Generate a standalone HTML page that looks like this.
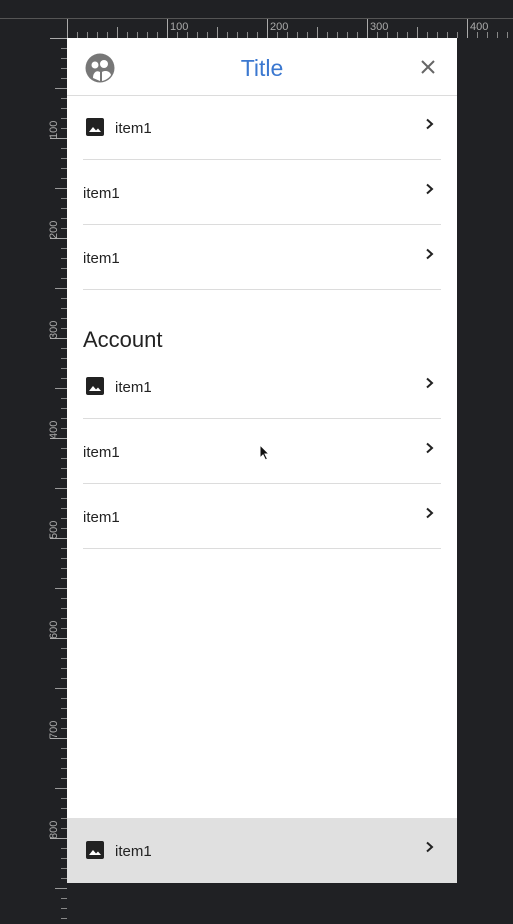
<!DOCTYPE html>
<html><head><meta charset="utf-8"><style>
*{margin:0;padding:0;box-sizing:border-box}
body{width:513px;height:924px;background:#202124;position:relative;overflow:hidden;font-family:"Liberation Sans",sans-serif}
.hr{position:absolute;left:0;top:18px;width:513px;height:1px;background:#555}
.rt{position:absolute;left:67px;top:19px;width:446px;height:19px;background:repeating-linear-gradient(90deg,#888 0 1px,transparent 1px 10px) 0 13px/100% 6px no-repeat}
.rt2{position:absolute;left:67px;top:19px;width:446px;height:19px;background:repeating-linear-gradient(90deg,#999 0 1px,transparent 1px 50px) 0 8px/100% 11px no-repeat}
.rt3{position:absolute;left:67px;top:19px;width:446px;height:19px;background:repeating-linear-gradient(90deg,#aaa 0 1px,transparent 1px 100px) 0 0/100% 19px no-repeat}
.rl{position:absolute;left:50px;top:38px;width:17px;height:886px;background:repeating-linear-gradient(180deg,#888 0 1px,transparent 1px 10px) 11px 0/6px 100% no-repeat}
.rl2{position:absolute;left:50px;top:38px;width:17px;height:886px;background:repeating-linear-gradient(180deg,#999 0 1px,transparent 1px 50px) 5px 0/12px 100% no-repeat}
.rl3{position:absolute;left:50px;top:38px;width:17px;height:886px;background:repeating-linear-gradient(180deg,#aaa 0 1px,transparent 1px 100px) 0 0/17px 100% no-repeat}
.tl{position:absolute;top:21px;font-size:11px;color:#aaa}
.vl{position:absolute;left:48px;font-size:11px;color:#aaa;transform:rotate(-90deg);transform-origin:left top}
.panel{position:absolute;left:67px;top:38px;width:390px;height:845px;background:#fff}
.title{position:absolute;left:0;width:390px;top:17px;text-align:center;font-size:23px;color:#3b78d0}
.div{position:absolute;height:1px;background:#dcdcdc}
.it{position:absolute;left:16px;font-size:15px;color:#222}
.chev{position:absolute;left:357px}
.img{position:absolute;left:19px;width:18px;height:18px}
</style></head><body>
<div class="hr"></div>
<div class="rt"></div><div class="rt2"></div><div class="rt3"></div>
<div class="tl" style="left:170px">100</div><div class="tl" style="left:270px">200</div><div class="tl" style="left:370px">300</div><div class="tl" style="left:470px">400</div>
<div class="rl"></div><div class="rl2"></div><div class="rl3"></div>
<div class="vl" style="top:139px">100</div><div class="vl" style="top:239px">200</div><div class="vl" style="top:339px">300</div><div class="vl" style="top:439px">400</div><div class="vl" style="top:539px">500</div><div class="vl" style="top:639px">600</div><div class="vl" style="top:739px">700</div><div class="vl" style="top:839px">800</div>
<div class="panel">
<svg style="position:absolute;left:18px;top:15px" width="30" height="30" viewBox="0 0 30 30"><circle cx="15" cy="15" r="14.5" fill="#777"/><circle cx="10" cy="12" r="3.5" fill="#fff"/><circle cx="19" cy="11" r="4" fill="#fff"/><path d="M8 25 C8 19 12 17 15 19 L15 28 Z" fill="#fff"/><path d="M17 28 L17 19 C20 17 25 18 26 22 C24 25 21 27 17 28Z" fill="#fff"/></svg>
<div class="title">Title</div>
<svg style="position:absolute;left:354px;top:22px" width="14" height="14" viewBox="0 0 14 14"><path d="M1 1L13 13M13 1L1 13" stroke="#666" stroke-width="2"/></svg>
<div class="div" style="left:0;width:390px;top:57px"></div>

<svg class="img" style="top:80px" viewBox="0 0 18 18"><rect width="18" height="18" rx="2" fill="#222"/><path d="M3 14L7 9L10 12.5L12 10.5L15 14Z" fill="#fff"/></svg>
<div class="it" style="left:48px;top:82px">item1</div>
<svg class="chev" style="top:80px" width="12" height="12" viewBox="0 0 12 12"><path d="M3 1.5L8 6L3 10.5" stroke="#222" stroke-width="2" fill="none"/></svg>
<div class="div" style="left:16px;width:358px;top:121px"></div>
<div class="it" style="top:147px">item1</div>
<svg class="chev" style="top:145px" width="12" height="12" viewBox="0 0 12 12"><path d="M3 1.5L8 6L3 10.5" stroke="#222" stroke-width="2" fill="none"/></svg>
<div class="div" style="left:16px;width:358px;top:186px"></div>
<div class="it" style="top:212px">item1</div>
<svg class="chev" style="top:210px" width="12" height="12" viewBox="0 0 12 12"><path d="M3 1.5L8 6L3 10.5" stroke="#222" stroke-width="2" fill="none"/></svg>
<div class="div" style="left:16px;width:358px;top:251px"></div>

<div class="it" style="top:289px;font-size:22px">Account</div>
<svg class="img" style="top:339px" viewBox="0 0 18 18"><rect width="18" height="18" rx="2" fill="#222"/><path d="M3 14L7 9L10 12.5L12 10.5L15 14Z" fill="#fff"/></svg>
<div class="it" style="left:48px;top:341px">item1</div>
<svg class="chev" style="top:339px" width="12" height="12" viewBox="0 0 12 12"><path d="M3 1.5L8 6L3 10.5" stroke="#222" stroke-width="2" fill="none"/></svg>
<div class="div" style="left:16px;width:358px;top:380px"></div>
<div class="it" style="top:406px">item1</div>
<svg class="chev" style="top:404px" width="12" height="12" viewBox="0 0 12 12"><path d="M3 1.5L8 6L3 10.5" stroke="#222" stroke-width="2" fill="none"/></svg>
<div class="div" style="left:16px;width:358px;top:445px"></div>
<div class="it" style="top:471px">item1</div>
<svg class="chev" style="top:469px" width="12" height="12" viewBox="0 0 12 12"><path d="M3 1.5L8 6L3 10.5" stroke="#222" stroke-width="2" fill="none"/></svg>
<div class="div" style="left:16px;width:358px;top:510px"></div>

<svg style="position:absolute;left:192px;top:406px" width="12" height="18" viewBox="0 0 12 18"><path d="M1 1L1 14L4 11L6.5 16L8.5 15L6 10L10 10Z" fill="#111" stroke="#fff" stroke-width="1"/></svg>

<div style="position:absolute;left:0;top:780px;width:390px;height:65px;background:#e0e0e0"></div>
<svg class="img" style="top:803px" viewBox="0 0 18 18"><rect width="18" height="18" rx="2" fill="#222"/><path d="M3 14L7 9L10 12.5L12 10.5L15 14Z" fill="#fff"/></svg>
<div class="it" style="left:48px;top:805px">item1</div>
<svg class="chev" style="top:803px" width="12" height="12" viewBox="0 0 12 12"><path d="M3 1.5L8 6L3 10.5" stroke="#222" stroke-width="2" fill="none"/></svg>
</div>
</body></html>
